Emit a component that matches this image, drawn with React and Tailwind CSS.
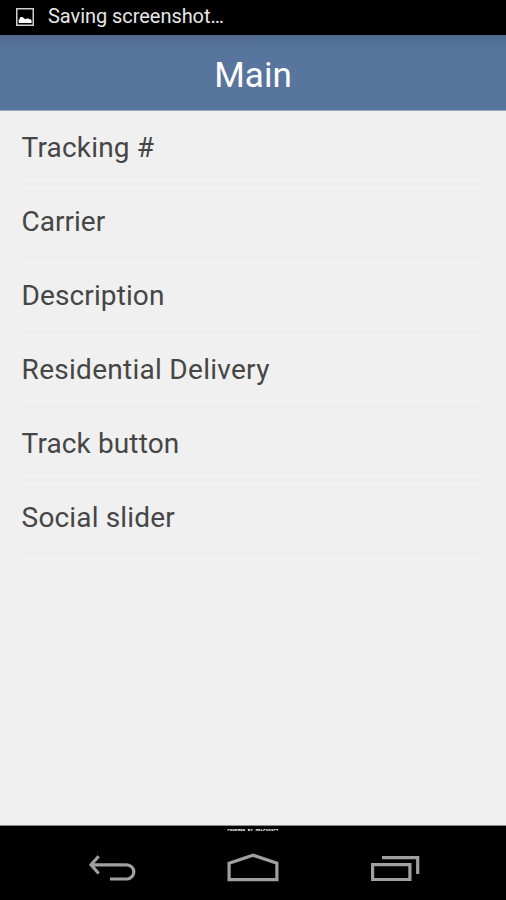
const items = [
  { label: "Tracking #", spacing: "tracking-[0.18px]" },
  { label: "Carrier", spacing: "tracking-[0px]" },
  { label: "Description", spacing: "tracking-[0.1px]" },
  { label: "Residential Delivery", spacing: "tracking-[0.28px]" },
  { label: "Track button", spacing: "tracking-[0.12px]" },
  { label: "Social slider", spacing: "tracking-[0.16px]" },
];

function StatusBar() {
  return (
    <div className="flex h-[35px] items-center bg-black pl-4 text-[#e6e6e6]">
      <svg width="18" height="18" viewBox="0 0 18 18" className="-mt-px">
        <rect x="0.75" y="0.75" width="16.5" height="16.5" fill="none" stroke="#d0d0d0" strokeWidth="1.5" />
        <path d="M2.7 15v-3.2l1-.8v-1l1.2-1h1.6l2.8 2.3 1.5-.8h1.8l.8.7h1.2l1 1v2.8z" fill="#fff" />
      </svg>
      <p className="mb-[3px] ml-[14px] whitespace-nowrap text-[20px] leading-6 tracking-[-0.05px]">
        Saving screenshot…
      </p>
    </div>
  );
}

function Header() {
  return (
    <header className="flex h-[76px] items-center justify-center border-b border-[#9ba8c6] bg-linear-to-b from-[#4f6b8f] via-[#58759e] via-20% to-[#58759e]">
      <h1 className="mt-[7px] text-[35px] leading-10 text-white">Main</h1>
    </header>
  );
}

function NavBar() {
  return (
    <nav className="flex h-[75px] flex-col border-t border-[#8c8c8c] bg-black">
      <p className="mt-[1px] text-center font-['Liberation_Mono',monospace] text-[4px] leading-[6px] font-bold tracking-[0.16px] text-white">
        POWERED BY HELPSHIFT
      </p>
      <div className="mt-[18px] flex justify-between pr-[86px] pl-[88px]">
        <svg width="50" height="36" viewBox="0 0 50 36" fill="none" stroke="#a0a0a0" strokeWidth="3.2">
          <path d="M10.7 5.2 3 13.8l7.7 8.7M3 13.8h35.7a7.1 7.1 0 0 1 0 14.2H22" />
        </svg>
        <svg width="52" height="36" viewBox="0 0 52 36" fill="none" stroke="#a0a0a0" strokeWidth="3.2" className="-ml-[3px]">
          <path d="M2.1 12.2 26 4.2l23.9 8v16.5H2.1z" />
        </svg>
        <svg width="49" height="36" viewBox="0 0 49 36" fill="none" stroke="#a0a0a0" strokeWidth="3.2">
          <path d="M1.6 13.6h37.3v14.9H1.6zM11 6.7h35.7V23" />
        </svg>
      </div>
    </nav>
  );
}

export default function App() {
  return (
    <div className="flex h-[900px] w-[506px] flex-col overflow-hidden bg-[#f0f0f0] font-[Roboto,sans-serif]">
      <StatusBar />
      <Header />
      <main className="flex-1 px-[21px]">
        <ul>
          {items.map((item) => (
            <li
              key={item.label}
              className="flex h-[74px] items-center border-b-2 border-[#ececec] pt-px pl-[0.6px] text-[28px] text-[#464646]"
            >
              <span className={item.spacing}>{item.label}</span>
            </li>
          ))}
        </ul>
      </main>
      <NavBar />
    </div>
  );
}
